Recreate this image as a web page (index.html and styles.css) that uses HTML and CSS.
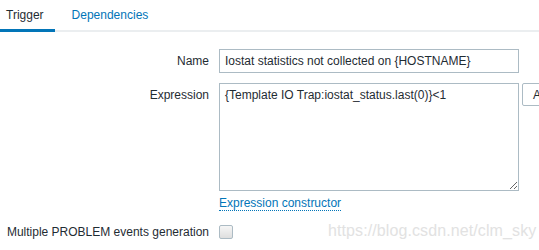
FILE: index.html
```html
<!DOCTYPE html>
<html lang="en">
<head>
  <meta charset="UTF-8">
  <title>Trigger</title>
  <link rel="stylesheet" href="styles.css">
</head>
<body>
  <div class="tabs">
    <a class="tab active">Trigger</a>
    <a class="tab">Dependencies</a>
  </div>

  <div class="form">
    <label class="form-label">Name</label>
    <div class="form-field">
      <input type="text" class="input" value="Iostat statistics not collected on {HOSTNAME}">
    </div>

    <label class="form-label label-top">Expression</label>
    <div class="form-field">
      <div class="expr-row">
        <textarea class="textarea">{Template IO Trap:iostat_status.last(0)}&lt;1</textarea>
        <button class="btn">Add</button>
      </div>
      <a class="link">Expression constructor</a>
    </div>

    <label class="form-label label-check">Multiple PROBLEM events generation</label>
    <div class="form-field">
      <span class="checkbox"></span>
    </div>
  </div>

  <div class="watermark">https://blog.csdn.net/clm_sky</div>
</body>
</html>
```

FILE: styles.css
```css
body {
  margin: 0;
  font-family: 'Liberation Sans', Arial, sans-serif;
  font-size: 12px;
  color: #1f2c33;
  background: #fff;
  position: relative;
  height: 250px;
  overflow: hidden;
}

.tabs {
  display: flex;
  border-bottom: 2px solid #ebeef0;
  height: 32px;
  box-sizing: border-box;
}

.tab {
  padding: 8px 6px 0 6px;
  margin-right: 11px;
  color: #0275b8;
  line-height: 15px;
  margin-bottom: -2px;
  border-bottom: 3px solid transparent;
}

.tab.active {
  color: #1f2c33;
  border-bottom-color: #0275b8;
  padding-right: 11px;
}

.form {
  display: grid;
  grid-template-columns: 209px 1fr;
  column-gap: 10px;
  row-gap: 10px;
  margin-top: 17px;
}

.form-label {
  text-align: right;
  line-height: 24px;
  white-space: nowrap;
}

.label-top {
  align-self: start;
}

.label-check {
  line-height: 22px;
}

.input,
.textarea {
  font-family: inherit;
  font-size: 12px;
  color: #1f2c33;
  border: 1px solid #acbbc4;
  box-sizing: border-box;
  width: 300px;
  padding: 0 5px;
  margin: 0;
  outline: none;
}

.input {
  height: 24px;
}

.textarea {
  height: 108px;
  padding: 4px 5px;
  line-height: 14px;
  resize: vertical;
}

.expr-row {
  display: flex;
  align-items: flex-start;
  gap: 3px;
}

.btn {
  font-family: inherit;
  font-size: 12px;
  height: 23px;
  padding: 0 10px;
  background: #fff;
  border: 1px solid #acbbc4;
  border-radius: 2px;
  color: #1f2c33;
  flex-shrink: 0;
}

.link {
  display: inline-block;
  margin-top: 5px;
  color: #0275b8;
  line-height: 14px;
  border-bottom: 1px dotted #0275b8;
}

.checkbox {
  display: inline-block;
  width: 12px;
  height: 12px;
  margin-top: 4px;
  border: 1px solid #acbbc4;
  border-radius: 2px;
  background: linear-gradient(#f6f6f6, #dedede);
}

.watermark {
  position: absolute;
  left: 328px;
  top: 222px;
  font-size: 16px;
  color: #e2e2e2;
  letter-spacing: 0.1px;
}
```
